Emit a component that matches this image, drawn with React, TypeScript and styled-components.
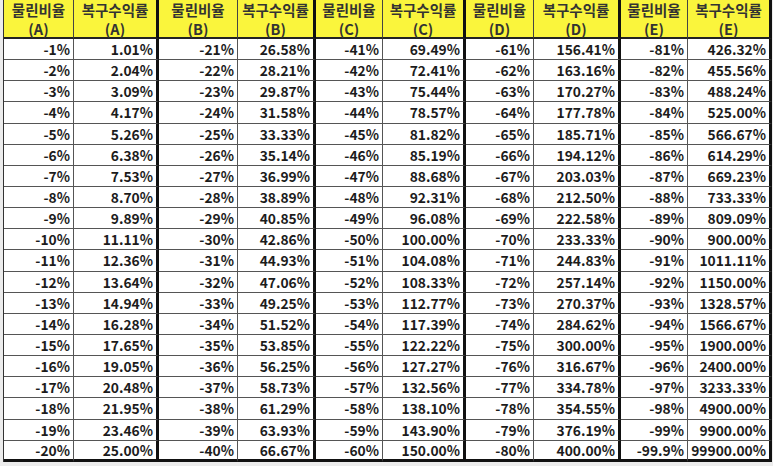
import React from 'react'
import styled, { createGlobalStyle } from 'styled-components'

const GlobalStyle = createGlobalStyle`
    html, body {
        margin: 0;
        padding: 0;
        background: #ececec;
    }
    body {
        font-family: 'Noto Sans CJK KR', 'Noto Sans', sans-serif;
    }
`

const groups = ['A', 'B', 'C', 'D', 'E']
const widths = [70, 85, 79, 78, 67, 83, 68, 87, 67, 84]

const lossFor = (group: number, row: number) => {
    if (group === 4 && row === 19) return 99.9
    return group * 20 + row + 1
}

const recovery = (loss: number) => ((loss / (100 - loss)) * 100).toFixed(2)

const App = () => {
    const rows = Array.from({ length: 20 }, (_, r) => r)
    return (
        <>
            <GlobalStyle />
            <Page>
                <Sheet>
                    {groups.map((g) => (
                        <React.Fragment key={g}>
                            <HeadCell>
                                <span>물린비율</span>
                                <span>({g})</span>
                            </HeadCell>
                            <HeadCell $groupEnd>
                                <span>복구수익률</span>
                                <span>({g})</span>
                            </HeadCell>
                        </React.Fragment>
                    ))}
                    {rows.map((r) =>
                        groups.map((g, gi) => {
                            const loss = lossFor(gi, r)
                            return (
                                <React.Fragment key={`${g}-${r}`}>
                                    <Cell $last={r === 19}>-{loss}%</Cell>
                                    <Cell $groupEnd $last={r === 19}>
                                        {recovery(loss)}%
                                    </Cell>
                                </React.Fragment>
                            )
                        })
                    )}
                </Sheet>
            </Page>
        </>
    )
}

export default App

const Page = styled.div`
    width: 773px;
    height: 466px;
    padding-left: 3px;
    box-sizing: border-box;
    overflow: hidden;
`
const Sheet = styled.div`
    display: grid;
    grid-template-columns: ${widths.map((w) => `${w}px`).join(' ')};
    grid-template-rows: 39px repeat(20, 21.15px);
    border-left: 1px solid #333;
    width: 768px;
    box-sizing: border-box;
    color: #1c1c1c;
`
const HeadCell = styled.div<{ $groupEnd?: boolean }>`
    display: flex;
    flex-direction: column;
    align-items: center;
    justify-content: center;
    background: #faf53c;
    font-size: 14.5px;
    font-weight: 700;
    line-height: 19px;
    color: #333;
    box-sizing: border-box;
    border-right: ${(p) => (p.$groupEnd ? '3px solid #111' : '1px solid #444')};
    border-bottom: 2px solid #222;
    white-space: nowrap;
`
const Cell = styled.div<{ $groupEnd?: boolean; $last?: boolean }>`
    display: flex;
    align-items: center;
    justify-content: flex-end;
    padding-right: 3px;
    background: #fff;
    font-size: 13.8px;
    font-weight: 700;
    box-sizing: border-box;
    border-right: ${(p) => (p.$groupEnd ? '3px solid #111' : '1px solid #555')};
    border-bottom: ${(p) => (p.$last ? '3px solid #111' : '1px solid #555')};
    white-space: nowrap;
`
